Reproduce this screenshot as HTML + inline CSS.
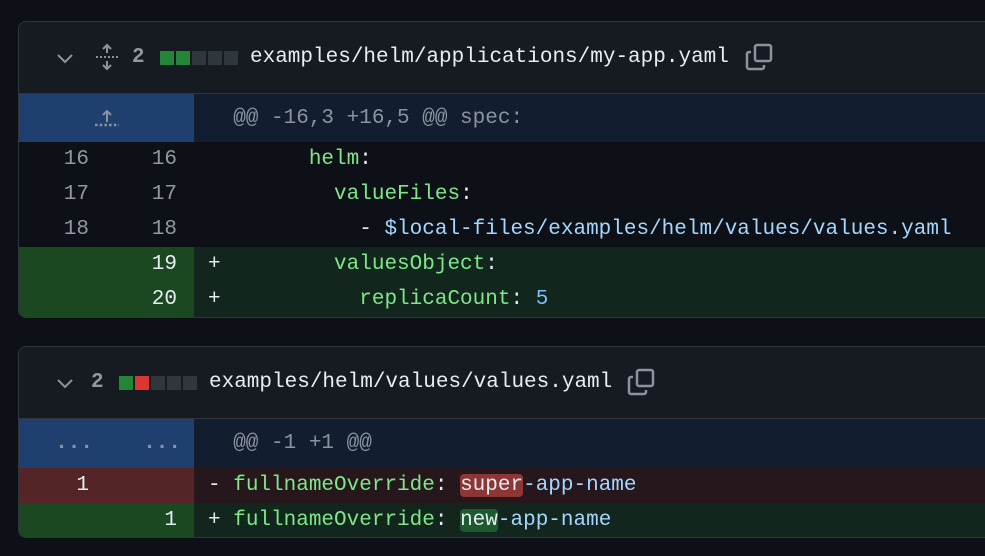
<!DOCTYPE html>
<html><head><style>
body{margin:0;width:985px;height:556px;background:#0d1117;overflow:hidden;font-family:"Liberation Mono",monospace;font-size:21px;position:relative}
.card{position:absolute;left:18px;width:1000px;border:1px solid #30363d;border-radius:8px;overflow:hidden;background:#0d1117}
.hdr{height:71px;background:#161b22;border-bottom:1px solid #30363d;position:relative;color:#e6edf3}
.hdr span{position:absolute;top:23px;line-height:26px}
.sq{position:absolute;top:29px;width:14px;height:14px}
.row{position:relative;height:35px;line-height:35px;white-space:pre}
.g1,.g2{position:absolute;top:0;height:100%;text-align:right;color:#9198a1}
.g1{left:0;width:70px}.g2{left:88px;width:70px}
.c{position:absolute;left:175px;top:0;height:100%;right:0;padding-left:14px}
.k{color:#7ee787}.s{color:#a5d6ff}.n{color:#79c0ff}.w{color:#e6edf3}
.gut{position:absolute;left:0;top:0;width:175px;height:100%}
</style></head><body>

<div class="card" style="top:21px;height:295px">
 <div class="hdr">
  <svg style="position:absolute;left:36px;top:28px" width="20" height="16" viewBox="0 0 20 16"><path d="M3 5l7 7 7-7" stroke="#8b949e" stroke-width="2" fill="none"/></svg>
  <svg style="position:absolute;left:75px;top:21px" width="26" height="28" viewBox="0 0 26 28"><path d="M13 2v8M9 6l4-4 4 4M13 26v-8M9 22l4 4 4-4" stroke="#8b949e" stroke-width="2" fill="none"/><path d="M2 14h22" stroke="#8b949e" stroke-width="2" stroke-dasharray="2 2"/></svg>
  <span style="left:113px;color:#9198a1;font-weight:bold">2</span>
  <div class="sq" style="left:141px;background:#238636"></div><div class="sq" style="left:157px;background:#238636"></div><div class="sq" style="left:173px;background:#30363d"></div><div class="sq" style="left:189px;background:#30363d"></div><div class="sq" style="left:205px;background:#30363d"></div>
  <span style="left:231px">examples/helm/applications/my-app.yaml</span>
  <svg style="position:absolute;left:726px;top:21px" width="28" height="28" viewBox="0 0 28 28"><rect x="10" y="2" width="16" height="16" rx="2" stroke="#8b949e" stroke-width="2.5" fill="none"/><path d="M6 9H4a2 2 0 0 0-2 2v13a2 2 0 0 0 2 2h13a2 2 0 0 0 2-2v-2" stroke="#8b949e" stroke-width="2.5" fill="none"/></svg>
 </div>
 <div class="row" style="height:48px;line-height:50px;background:#121d2f">
  <div class="gut" style="background:#1f3f6f"></div>
  <svg style="position:absolute;left:75px;top:14px" width="26" height="20" viewBox="0 0 26 20"><path d="M13 14V3M9 7l4-4 4 4" stroke="#8b949e" stroke-width="2" fill="none"/><path d="M1 17h24" stroke="#8b949e" stroke-width="2.5" stroke-dasharray="2.5 2.2"/></svg>
  <div class="c" style="color:#8b949e">  @@ -16,3 +16,5 @@ spec:</div>
 </div>
 <div class="row"><div class="g1">16</div><div class="g2">16</div><div class="c w">        <span class="k">helm</span>:</div></div>
 <div class="row"><div class="g1">17</div><div class="g2">17</div><div class="c w">          <span class="k">valueFiles</span>:</div></div>
 <div class="row"><div class="g1">18</div><div class="g2">18</div><div class="c w">            - <span class="s">$local-files/examples/helm/values/values.yaml</span></div></div>
 <div class="row" style="background:#12261e"><div class="gut" style="background:#1b4721"></div><div class="g2" style="color:#e6edf3">19</div><div class="c w">+         <span class="k">valuesObject</span>:</div></div>
 <div class="row" style="background:#12261e"><div class="gut" style="background:#1b4721"></div><div class="g2" style="color:#e6edf3">20</div><div class="c w">+           <span class="k">replicaCount</span>: <span class="n">5</span></div></div>
</div>

<div class="card" style="top:346px;height:190px">
 <div class="hdr">
  <svg style="position:absolute;left:36px;top:28px" width="20" height="16" viewBox="0 0 20 16"><path d="M3 5l7 7 7-7" stroke="#8b949e" stroke-width="2" fill="none"/></svg>
  <span style="left:72px;color:#9198a1;font-weight:bold">2</span>
  <div class="sq" style="left:100px;background:#238636"></div><div class="sq" style="left:116px;background:#da3633"></div><div class="sq" style="left:132px;background:#30363d"></div><div class="sq" style="left:148px;background:#30363d"></div><div class="sq" style="left:164px;background:#30363d"></div>
  <span style="left:190px">examples/helm/values/values.yaml</span>
  <svg style="position:absolute;left:608px;top:21px" width="28" height="28" viewBox="0 0 28 28"><rect x="10" y="2" width="16" height="16" rx="2" stroke="#8b949e" stroke-width="2.5" fill="none"/><path d="M6 9H4a2 2 0 0 0-2 2v13a2 2 0 0 0 2 2h13a2 2 0 0 0 2-2v-2" stroke="#8b949e" stroke-width="2.5" fill="none"/></svg>
 </div>
 <div class="row" style="height:49px;line-height:49px;background:#121d2f">
  <div class="gut" style="background:#1f3f6f"></div>
  <div class="g1" style="color:#8b949e;width:74px;font-weight:bold">...</div><div class="g2" style="color:#8b949e;width:74px;font-weight:bold">...</div>
  <div class="c" style="color:#8b949e">  @@ -1 +1 @@</div>
 </div>
 <div class="row" style="background:#25171c"><div class="gut" style="background:#542426"></div><div class="g1" style="color:#e6edf3">1</div><div class="c w">- <span class="k">fullnameOverride</span>: <span style="background:#8e3536;border-radius:4px">super</span><span class="s">-app-name</span></div></div>
 <div class="row" style="background:#12261e"><div class="gut" style="background:#1b4721"></div><div class="g2" style="color:#e6edf3">1</div><div class="c w">+ <span class="k">fullnameOverride</span>: <span style="background:#1e5a30;border-radius:4px">new</span><span class="s">-app-name</span></div></div>
</div>
</body></html>
